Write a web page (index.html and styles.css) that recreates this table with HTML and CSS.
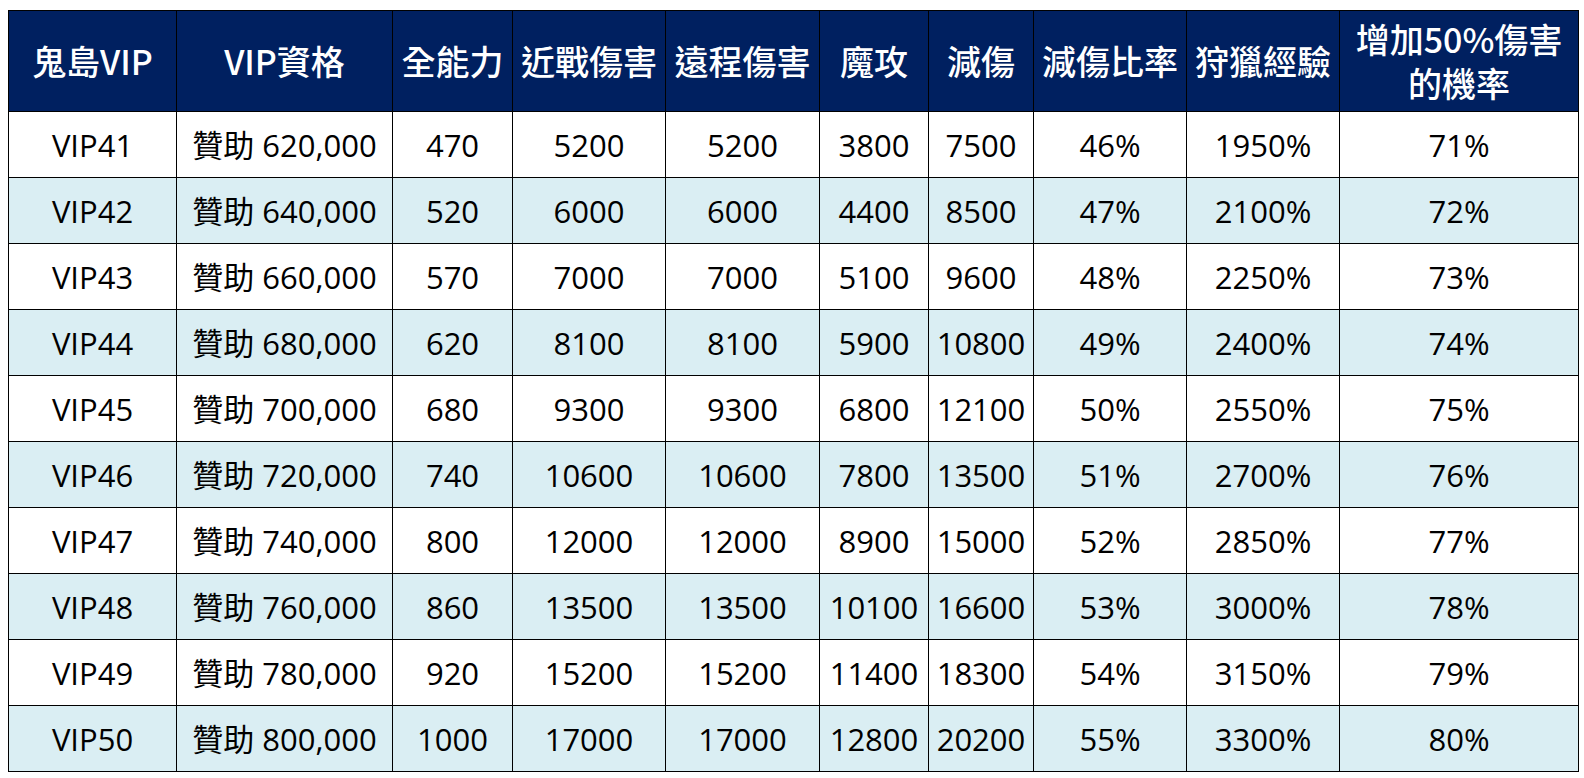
FILE: index.html
```html
<!DOCTYPE html>
<html lang="zh-Hant">
<head>
<meta charset="utf-8">
<title>鬼島VIP</title>
<link rel="stylesheet" href="styles.css">
</head>
<body>
<table class="vip-table">
  <colgroup>
    <col class="c1"><col class="c2"><col class="c3"><col class="c4"><col class="c5">
    <col class="c6"><col class="c7"><col class="c8"><col class="c9"><col class="c10">
  </colgroup>
  <thead>
    <tr>
      <th>鬼島VIP</th><th>VIP資格</th><th>全能力</th><th>近戰傷害</th><th>遠程傷害</th>
      <th>魔攻</th><th>減傷</th><th>減傷比率</th><th>狩獵經驗</th><th>增加50%傷害<br>的機率</th>
    </tr>
  </thead>
  <tbody>
    <tr><td>VIP41</td><td>贊助 620,000</td><td>470</td><td>5200</td><td>5200</td><td>3800</td><td>7500</td><td>46%</td><td>1950%</td><td>71%</td></tr>
    <tr><td>VIP42</td><td>贊助 640,000</td><td>520</td><td>6000</td><td>6000</td><td>4400</td><td>8500</td><td>47%</td><td>2100%</td><td>72%</td></tr>
    <tr><td>VIP43</td><td>贊助 660,000</td><td>570</td><td>7000</td><td>7000</td><td>5100</td><td>9600</td><td>48%</td><td>2250%</td><td>73%</td></tr>
    <tr><td>VIP44</td><td>贊助 680,000</td><td>620</td><td>8100</td><td>8100</td><td>5900</td><td>10800</td><td>49%</td><td>2400%</td><td>74%</td></tr>
    <tr><td>VIP45</td><td>贊助 700,000</td><td>680</td><td>9300</td><td>9300</td><td>6800</td><td>12100</td><td>50%</td><td>2550%</td><td>75%</td></tr>
    <tr><td>VIP46</td><td>贊助 720,000</td><td>740</td><td>10600</td><td>10600</td><td>7800</td><td>13500</td><td>51%</td><td>2700%</td><td>76%</td></tr>
    <tr><td>VIP47</td><td>贊助 740,000</td><td>800</td><td>12000</td><td>12000</td><td>8900</td><td>15000</td><td>52%</td><td>2850%</td><td>77%</td></tr>
    <tr><td>VIP48</td><td>贊助 760,000</td><td>860</td><td>13500</td><td>13500</td><td>10100</td><td>16600</td><td>53%</td><td>3000%</td><td>78%</td></tr>
    <tr><td>VIP49</td><td>贊助 780,000</td><td>920</td><td>15200</td><td>15200</td><td>11400</td><td>18300</td><td>54%</td><td>3150%</td><td>79%</td></tr>
    <tr><td>VIP50</td><td>贊助 800,000</td><td>1000</td><td>17000</td><td>17000</td><td>12800</td><td>20200</td><td>55%</td><td>3300%</td><td>80%</td></tr>
  </tbody>
</table>
</body>
</html>
```

FILE: styles.css
```css
html, body {
  margin: 0;
  padding: 0;
  background: #ffffff;
}

body {
  padding: 10px 0 0 8px;
  font-family: "Open Sans", "Noto Sans CJK TC", sans-serif;
}

.vip-table {
  border-collapse: collapse;
  table-layout: fixed;
  width: 1571px;
}

.c1 { width: 168px; }
.c2 { width: 216px; }
.c3 { width: 120px; }
.c4 { width: 153px; }
.c5 { width: 154px; }
.c6 { width: 109px; }
.c7 { width: 105px; }
.c8 { width: 153px; }
.c9 { width: 153px; }
.c10 { width: 239px; }

.vip-table th,
.vip-table td {
  border: 1px solid #000000;
  text-align: center;
  vertical-align: middle;
  padding: 0;
  white-space: nowrap;
}

.vip-table th {
  background: #002060;
  color: #ffffff;
  height: 100px;
  font-family: "Noto Sans CJK TC", "Open Sans", sans-serif;
  font-size: 34px;
  font-weight: 500;
  line-height: 44px;
}

.vip-table td {
  height: 65px;
  font-size: 31px;
  color: #000000;
  line-height: 40px;
}

.vip-table tbody tr:nth-child(even) td {
  background: #daeef3;
}
```
